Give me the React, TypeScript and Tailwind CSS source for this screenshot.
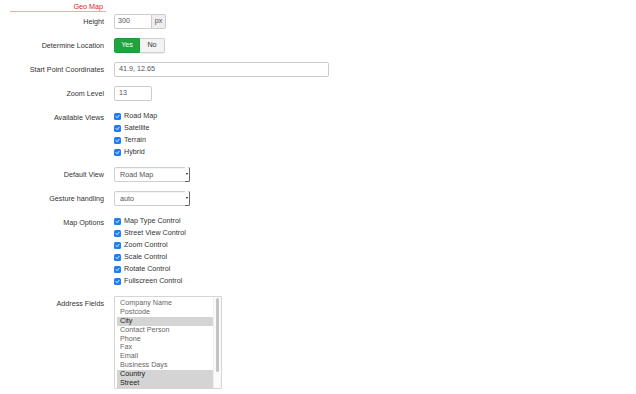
import React from "react";

const font = { fontFamily: '"Liberation Sans", Arial, sans-serif' };

function Label({ children }: { children: React.ReactNode }) {
  return (
    <div className="w-[104px] shrink-0 text-right leading-[15px] text-[#333]">{children}</div>
  );
}

function Row({ label, children }: { label: string; children: React.ReactNode }) {
  return (
    <div className="flex items-start gap-[10px]">
      <Label>{label}</Label>
      <div>{children}</div>
    </div>
  );
}

function Check({ label }: { label: string }) {
  return (
    <div className="flex h-[12px] items-center gap-[3px] text-[#333]">
      <span className="flex h-[7px] w-[7px] items-center justify-center rounded-[1.5px] bg-[#1f7ff0]">
        <svg width="5" height="5" viewBox="0 0 10 10">
          <path d="M2 5.2 L4.2 7.4 L8 2.8" fill="none" stroke="white" strokeWidth="1.8" strokeLinecap="round" strokeLinejoin="round" />
        </svg>
      </span>
      <span className="leading-[12px]">{label}</span>
    </div>
  );
}

function Select({ value }: { value: string }) {
  return (
    <div className="relative flex h-[15px] w-[76px] items-center rounded-[2px] border border-[#cfcfcf] bg-white pl-[5px] text-[#555] shadow-[inset_0_1px_1px_rgba(0,0,0,0.05)]">
      <span className="leading-[13px]">{value}</span>
      <span className="absolute right-[-1px] top-[-1px] flex h-[15px] w-[5px] items-center justify-center rounded-r-[2px] border-r border-b border-[#666] bg-white">
        <span className="block h-0 w-0 border-x-[1.5px] border-t-[2px] border-x-transparent border-t-[#111]" />
      </span>
    </div>
  );
}

const fields: { name: string; sel?: boolean }[] = [
  { name: "Company Name" },
  { name: "Postcode" },
  { name: "City", sel: true },
  { name: "Contact Person" },
  { name: "Phone" },
  { name: "Fax" },
  { name: "Email" },
  { name: "Business Days" },
  { name: "Country", sel: true },
  { name: "Street", sel: true },
];

export default function App() {
  return (
    <div className="h-[394px] w-[636px] overflow-hidden bg-white text-[7.2px]" style={font}>
      <div className="ml-[10px] h-[12px] w-[96px] border-b border-[#f2a9a9] pr-[3px] pt-[2px] text-right leading-[9px] text-[#d21f1f]">
        Geo Map
      </div>
      <div className="flex flex-col gap-[9px] pt-[2px]">
        <Row label="Height">
          <div className="flex h-[15px]">
            <div className="flex w-[38px] items-center rounded-l-[2px] border border-[#ccc] bg-white pl-[3px] text-[#555]">300</div>
            <div className="flex w-[14px] items-center justify-center rounded-r-[2px] border border-l-0 border-[#ccc] bg-[#eee] text-[#555]">px</div>
          </div>
        </Row>
        <Row label="Determine Location">
          <div className="flex h-[15px]">
            <div className="flex w-[26px] items-center justify-center rounded-l-[2px] border border-[#1f9a38] bg-[#22a33d] text-white">Yes</div>
            <div className="flex w-[25px] items-center justify-center rounded-r-[2px] border border-l-0 border-[#cfcfcf] bg-[#f3f3f3] text-[#333] shadow-[0_1px_1px_rgba(0,0,0,0.08)]">No</div>
          </div>
        </Row>
        <Row label="Start Point Coordinates">
          <div className="flex h-[15px] w-[215px] items-center rounded-[2px] border border-[#ccc] bg-white pl-[4px] text-[#555]">41.9, 12.65</div>
        </Row>
        <Row label="Zoom Level">
          <div className="flex h-[15px] w-[38px] items-center rounded-[2px] border border-[#ccc] bg-white pl-[4px] text-[#555]">13</div>
        </Row>
        <Row label="Available Views">
          <div className="flex flex-col">
            <Check label="Road Map" />
            <Check label="Satellite" />
            <Check label="Terrain" />
            <Check label="Hybrid" />
          </div>
        </Row>
        <Row label="Default View">
          <Select value="Road Map" />
        </Row>
        <Row label="Gesture handling">
          <Select value="auto" />
        </Row>
        <Row label="Map Options">
          <div className="flex flex-col">
            <Check label="Map Type Control" />
            <Check label="Street View Control" />
            <Check label="Zoom Control" />
            <Check label="Scale Control" />
            <Check label="Rotate Control" />
            <Check label="Fullscreen Control" />
          </div>
        </Row>
        <Row label="Address Fields">
          <div className="flex h-[93px] w-[108px] overflow-hidden rounded-[1px] border border-[#d5d5d5] bg-white">
            <div className="flex flex-1 flex-col overflow-hidden pl-[2px] pt-[2px]">
              {fields.map((f) => (
                <div
                  key={f.name}
                  className={
                    f.sel
                      ? "h-[8.9px] shrink-0 bg-[#d4d4d4] pl-[3px] leading-[8.9px] text-[#1a1a1a]"
                      : "h-[8.9px] shrink-0 pl-[3px] leading-[8.9px] text-[#666]"
                  }
                >
                  {f.name}
                </div>
              ))}
            </div>
            <div className="w-[8px] shrink-0 border-l border-[#eee] bg-[#fafafa] pt-[1px] pl-[2px]">
              <div className="h-[74px] w-[3px] rounded-full bg-[#c4c4c4]" />
            </div>
          </div>
        </Row>
      </div>
    </div>
  );
}
